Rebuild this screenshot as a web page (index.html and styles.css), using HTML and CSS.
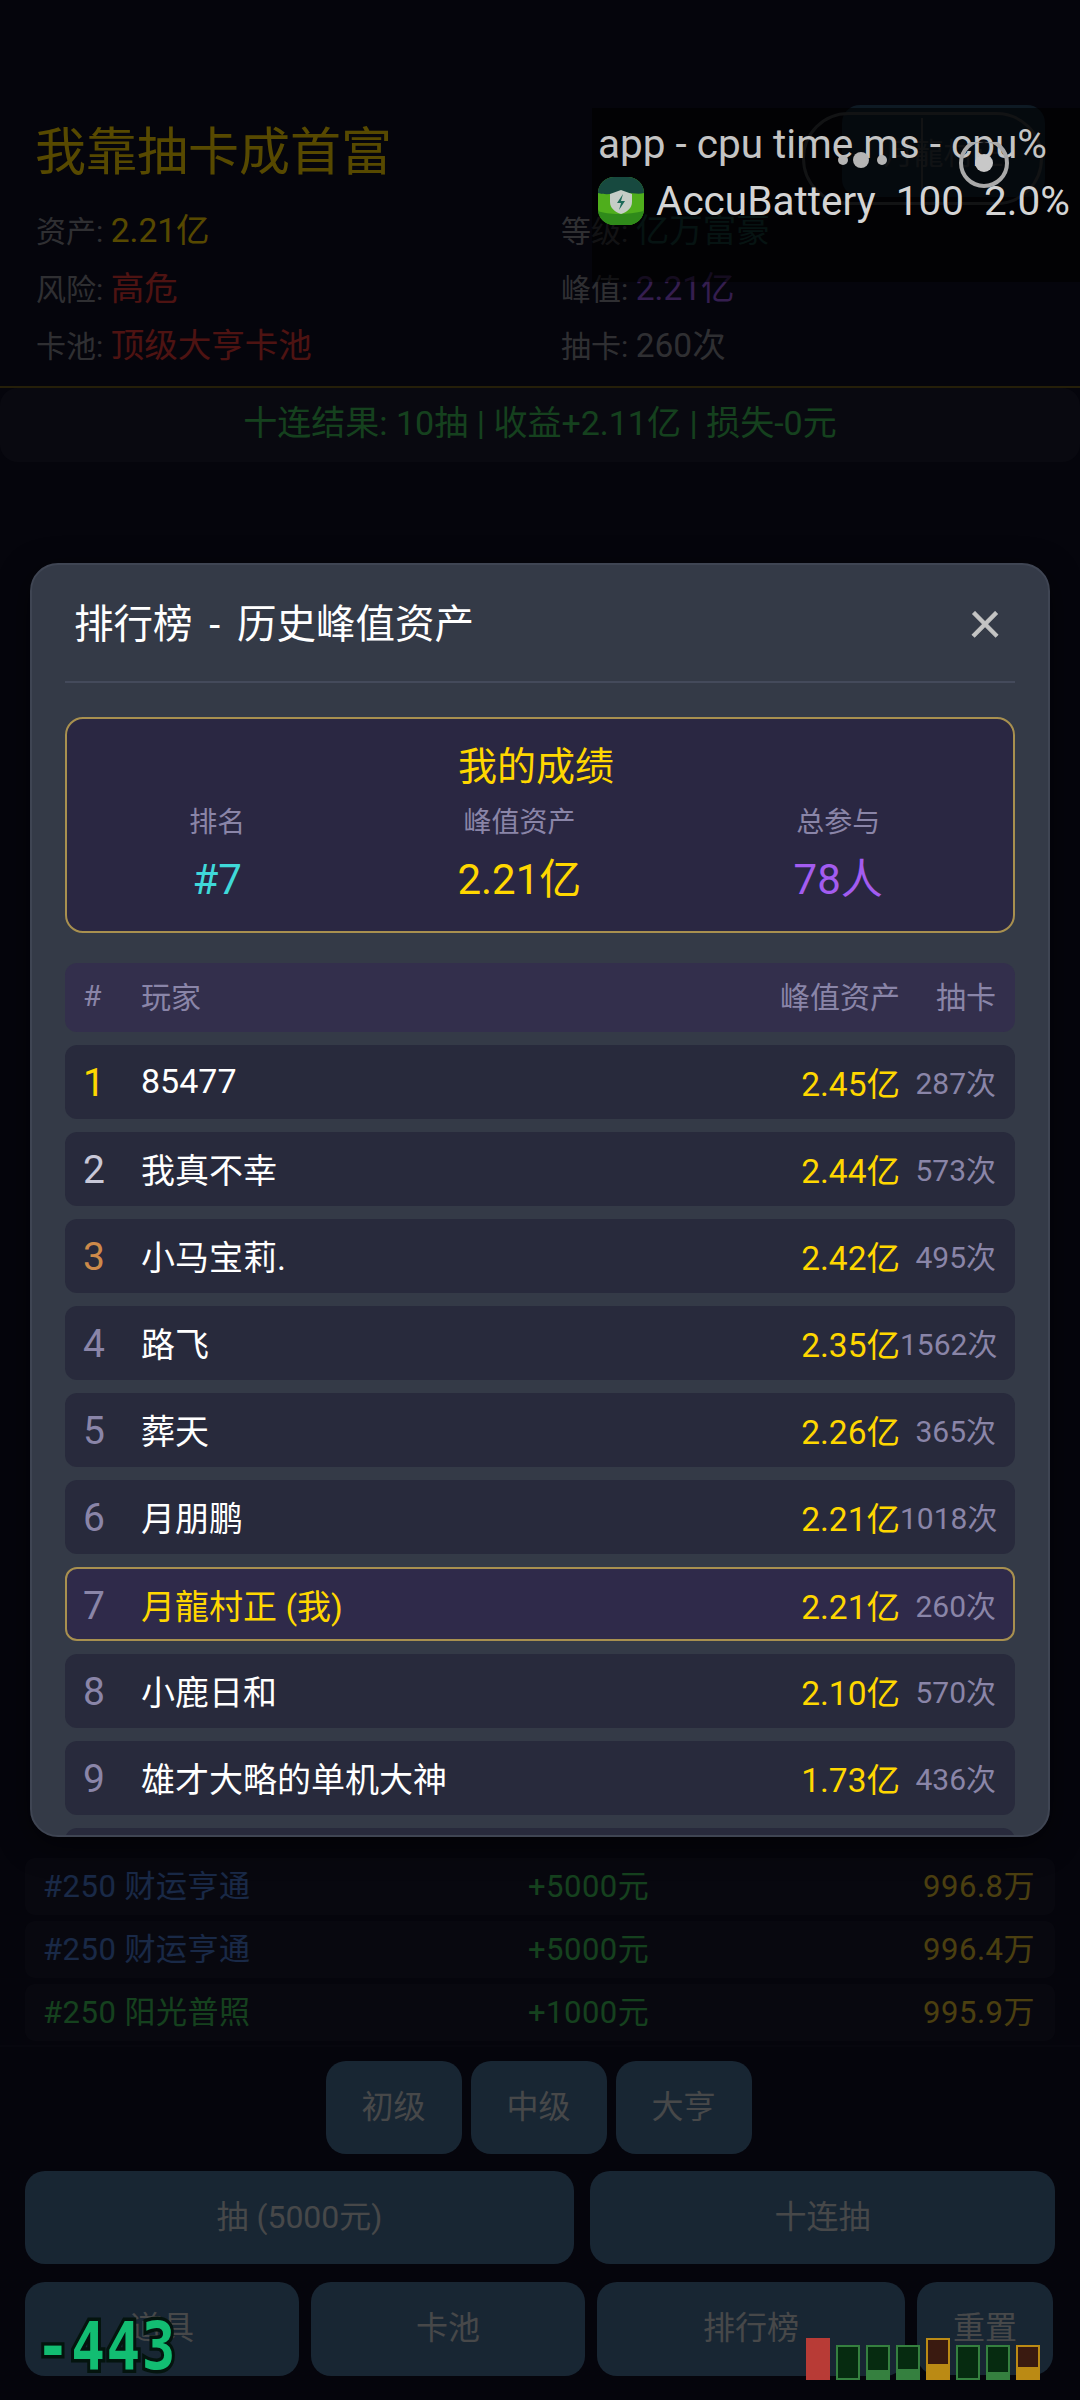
FILE: index.html
```html
<!DOCTYPE html>
<html lang="zh-CN">
<head>
    <meta charset="UTF-8">
    <meta name="viewport" content="width=device-width, initial-scale=1.0">
    <title>我靠抽卡成首富</title>
    <link rel="stylesheet" href="styles.css">
</head>
<body>
    <div class="game">
        <div class="top-panel">
            <div class="title-row">
                <h1>我靠抽卡成首富</h1>
                <div class="user-btn">月龍村正</div>
            </div>
            <div class="stats">
                <div>资产: <span class="gold">2.21亿</span></div>
                <div>等级: <span class="teal">亿万富豪</span></div>
                <div>风险: <span class="red">高危</span></div>
                <div>峰值: <span class="purple">2.21亿</span></div>
                <div>卡池: <span class="red">顶级大亨卡池</span></div>
                <div>抽卡: <span>260次</span></div>
            </div>
        </div>
        <div class="result-bar">十连结果: 10抽 | 收益+2.11亿 | 损失-0元</div>

        <div class="log">
            <div class="log-row">
                <span class="log-name blue">#250 财运亨通</span>
                <span class="log-gain">+5000元</span>
                <span class="log-total">996.8万</span>
            </div>
            <div class="log-row">
                <span class="log-name blue">#250 财运亨通</span>
                <span class="log-gain">+5000元</span>
                <span class="log-total">996.4万</span>
            </div>
            <div class="log-row">
                <span class="log-name green">#250 阳光普照</span>
                <span class="log-gain">+1000元</span>
                <span class="log-total">995.9万</span>
            </div>
        </div>

        <div class="controls">
            <div class="btn-row center">
                <button class="btn small">初级</button>
                <button class="btn small">中级</button>
                <button class="btn small">大亨</button>
            </div>
            <div class="btn-row draw">
                <button class="btn single">抽 (5000元)</button>
                <button class="btn ten">十连抽</button>
            </div>
            <div class="btn-row tools">
                <button class="btn tool">道具</button>
                <button class="btn tool">卡池</button>
                <button class="btn rank">排行榜</button>
                <button class="btn small">重置</button>
            </div>
        </div>
    </div>

    <div class="backdrop"></div>

    <div class="capsule">
        <svg width="241" height="93" viewBox="0 0 241 93">
            <rect x="1.5" y="1.5" width="238" height="90" rx="45" fill="none" stroke="#2e3033" stroke-width="3"/>
            <line x1="120" y1="6" x2="120" y2="88" stroke="#2e3033" stroke-width="2"/>
        </svg>
    </div>

    <div class="modal">
        <div class="modal-head">
            <h2>排行榜 - 历史峰值资产</h2>
            <span class="close">×</span>
        </div>

        <div class="my-card">
            <h3>我的成绩</h3>
            <div class="my-stats">
                <div class="my-stat">
                    <div class="my-label">排名</div>
                    <div class="my-value cyan">#7</div>
                </div>
                <div class="my-stat">
                    <div class="my-label">峰值资产</div>
                    <div class="my-value yellow">2.21亿</div>
                </div>
                <div class="my-stat">
                    <div class="my-label">总参与</div>
                    <div class="my-value violet">78人</div>
                </div>
            </div>
        </div>

        <div class="table-head">
            <span class="col-rank">#</span>
            <span class="col-name">玩家</span>
            <span class="col-asset">峰值资产</span>
            <span class="col-count">抽卡</span>
        </div>

        <div class="rows">
            <div class="row"><span class="col-rank first">1</span><span class="col-name">85477</span><span class="col-asset">2.45亿</span><span class="col-count">287次</span></div>
            <div class="row"><span class="col-rank second">2</span><span class="col-name">我真不幸</span><span class="col-asset">2.44亿</span><span class="col-count">573次</span></div>
            <div class="row"><span class="col-rank third">3</span><span class="col-name">小马宝莉.</span><span class="col-asset">2.42亿</span><span class="col-count">495次</span></div>
            <div class="row"><span class="col-rank">4</span><span class="col-name">路飞</span><span class="col-asset">2.35亿</span><span class="col-count">1562次</span></div>
            <div class="row"><span class="col-rank">5</span><span class="col-name">葬天</span><span class="col-asset">2.26亿</span><span class="col-count">365次</span></div>
            <div class="row"><span class="col-rank">6</span><span class="col-name">月朋鹏</span><span class="col-asset">2.21亿</span><span class="col-count">1018次</span></div>
            <div class="row me"><span class="col-rank">7</span><span class="col-name">月龍村正 (我)</span><span class="col-asset">2.21亿</span><span class="col-count">260次</span></div>
            <div class="row"><span class="col-rank">8</span><span class="col-name">小鹿日和</span><span class="col-asset">2.10亿</span><span class="col-count">570次</span></div>
            <div class="row"><span class="col-rank">9</span><span class="col-name">雄才大略的单机大神</span><span class="col-asset">1.73亿</span><span class="col-count">436次</span></div>
            <div class="row"></div>
        </div>
    </div>

    <!-- dev overlays that sit on top of the app -->
    <div class="perf">
        <div class="perf-line">app - cpu time ms - cpu%</div>
        <div class="perf-line app">
            <svg width="46" height="48" viewBox="0 0 46 48">
                <rect width="46" height="48" rx="16" fill="#4fae1c"/>
                <path d="M0 34c10 4 30 4 46 0v-2a16 16 0 0 1 -16 16h-14a16 16 0 0 1 -16 -14z" fill="#2f8a1a"/>
                <path d="M0 16a16 16 0 0 1 16-16h14a16 16 0 0 1 16 16c-7 2-13-1-23 0s-16 2-23 0z" fill="#17493f"/>
                <path d="M23 13l11 4v8c0 6-5 10-11 12-6-2-11-6-11-12v-8z" fill="#c6cdc6"/>
                <path d="M25 17l-6 9h4l-2 7 6-9h-4z" fill="#1d6a58"/>
            </svg>
            <span>AccuBattery  100  2.0%</span>
        </div>
    </div>

    <svg class="dots" width="240" height="60" viewBox="0 0 240 60">
        <circle cx="5" cy="18" r="5" fill="#b5b5b5"/>
        <circle cx="23" cy="18" r="8" fill="#b5b5b5"/>
        <circle cx="44" cy="18" r="5" fill="#b5b5b5"/>
        <circle cx="146" cy="21" r="23" fill="none" stroke="#a9a9a9" stroke-width="4"/>
        <circle cx="146" cy="21" r="9" fill="#c8c8c8"/>
    </svg>

    <div class="delta">-443</div>

    <div class="bars">
        <div class="bar tall red-bar"></div>
        <div class="bar green-bar"><i style="height: 31px"></i></div>
        <div class="bar green-bar"><i style="height: 23px"></i></div>
        <div class="bar green-bar"><i style="height: 22px"></i></div>
        <div class="bar tall amber-bar"><i style="height: 24px"></i></div>
        <div class="bar green-bar"><i style="height: 31px"></i></div>
        <div class="bar green-bar"><i style="height: 25px"></i></div>
        <div class="bar amber-bar"><i style="height: 20px"></i></div>
    </div>
</body>
</html>
```

FILE: styles.css
```css
* {
    margin: 0;
    padding: 0;
    box-sizing: border-box;
    font-family: Roboto, 'Noto Sans CJK SC', sans-serif;
}

body {
    width: 1080px;
    height: 2400px;
    position: relative;
    overflow: hidden;
    background-color: #0f0f23;
}

.game {
    height: 2400px;
    display: flex;
    flex-direction: column;
    padding-top: 105px;
    color: #8a8a94;
    font-size: 33px;
}

.title-row {
    display: flex;
    justify-content: space-between;
    align-items: center;
    padding: 0 35px;
    height: 92px;
}

h1 {
    font-size: 51px;
    font-weight: 400;
    color: #ffd700;
    padding-bottom: 6px;
}

.user-btn {
    width: 203px;
    height: 92px;
    display: flex;
    align-items: center;
    justify-content: center;
    border-radius: 18px;
    background-color: #2a4d69;
    color: #7a8a99;
    font-size: 30px;
}

.top-panel {
    border-bottom: 2px solid #6e5d1c;
}

.stats {
    display: grid;
    grid-template-columns: 525px 1fr;
    padding: 5px 36px 11px;
}

.stats > div {
    height: 57.5px;
    line-height: 57px;
    font-size: 30px;
}

.stats span {
    font-size: 33.5px;
}

.gold { color: #ffd700; }
.teal { color: #2f8f83; }
.red { color: #e53935; }
.purple { color: #9b59e6; }

.result-bar {
    height: 74px;
    line-height: 70px;
    text-align: center;
    border-radius: 18px;
    background-color: #1c1c30;
    color: #3fbf58;
    font-size: 34px;
}

.log {
    margin-top: auto;
    padding: 0 25px;
    display: flex;
    flex-direction: column;
    gap: 6px;
}

.log-row {
    height: 57px;
    padding: 0 20px 6px 18px;
    display: grid;
    grid-template-columns: 2fr 1.5fr 1.5fr;
    align-items: center;
    border-radius: 10px;
    background-color: #1a1a2e;
    font-size: 31px;
    letter-spacing: 0.5px;
}

.log-name.blue { color: #4a7ad0; }
.log-name.green { color: #3fbf58; }
.log-gain { color: #3fbf58; text-align: center; }
.log-total { color: #ddba2f; text-align: right; }

.controls {
    margin-top: 4px;
    height: 355px;
    padding: 14px 25px 0;
    background-color: #101024;
    border-top: 2px solid #15152a;
    display: flex;
    flex-direction: column;
}

.btn-row {
    display: flex;
}

.btn-row.center {
    justify-content: center;
    gap: 9px;
    padding-right: 3px;
    margin-bottom: 17px;
}

.btn-row.draw {
    gap: 16px;
    margin-bottom: 18px;
}

.btn-row.tools {
    gap: 12px;
}

.btn {
    border: none;
    border-radius: 20px;
    padding-bottom: 8px;
    background-color: #476f96;
    color: #cfd3d6;
    font-size: 32px;
}

.btn.small { width: 136px; height: 93px; }
.btn.single { width: 549px; height: 93px; }
.btn.ten { width: 465px; height: 93px; }
.btn.tool { width: 274px; height: 94px; }
.btn.rank { width: 308px; height: 94px; }

.backdrop {
    position: absolute;
    inset: 0;
    background-color: rgba(0, 0, 0, 0.66);
}

.capsule {
    position: absolute;
    left: 802px;
    top: 112px;
    height: 93px;
}

/* leaderboard dialog */
.modal {
    position: absolute;
    left: 30px;
    top: 563px;
    width: 1020px;
    height: 1274px;
    overflow: hidden;
    padding: 0 33px;
    border-radius: 28px;
    border: 2px solid #3f4553;
    background-color: #343a47;
    box-shadow: 0 8px 30px rgba(0, 0, 0, 0.5);
    color: white;
}

.modal-head {
    height: 118px;
    display: flex;
    justify-content: space-between;
    align-items: center;
    border-bottom: 2px solid #444a5b;
    padding: 0 14px 0 9px;
}

h2 {
    font-size: 39.5px;
    font-weight: 400;
    word-spacing: 7px;
    padding-bottom: 6px;
}

.close {
    font-size: 60px;
    font-weight: 300;
    line-height: 1;
    padding-bottom: 6px;
    color: #c4c4c4;
    -webkit-text-stroke: 1px #c4c4c4;
}

.my-card {
    margin-top: 34px;
    height: 216px;
    padding: 0 24px 0 16px;
    border: 2px solid #a8904f;
    border-radius: 18px;
    background-color: #2a2742;
    text-align: center;
}

h3 {
    padding-top: 21px;
    font-size: 39px;
    line-height: 54px;
    font-weight: 400;
    color: #ffd700;
}

.my-stats {
    display: flex;
    justify-content: space-around;
    margin-top: 9px;
}

.my-label {
    font-size: 28px;
    line-height: 40px;
    color: #8a85a8;
}

.my-value {
    margin-top: 6px;
    font-size: 42px;
    line-height: 62px;
}

.cyan { color: #3fd9d9; }
.yellow { color: #ffd700; }
.violet { color: #a35cf0; }

.table-head, .row {
    display: grid;
    grid-template-columns: 58px 1fr auto 96px;
    align-items: center;
    padding: 0 19px 2px 18px;
    border-radius: 12px;
}

.table-head {
    height: 69px;
    margin-top: 30px;
    padding-bottom: 5px;
    background-color: #332f4c;
    font-size: 30px;
    color: #8a85a8;
}

.rows {
    margin-top: 13px;
    display: flex;
    flex-direction: column;
    gap: 13px;
}

.row {
    height: 74px;
    flex-shrink: 0;
    background-color: #282a3c;
    font-size: 34px;
}

.col-asset {
    text-align: right;
}

.col-count {
    text-align: right;
    white-space: nowrap;
}

.row .col-rank {
    padding-top: 3px;
    font-size: 39px;
    color: #8a85a8;
}

.row .col-rank.first { color: #ffd700; }
.row .col-rank.second { color: #c8c8d8; }
.row .col-rank.third { color: #cd8a4a; }

.row .col-asset {
    color: #ffd700;
    font-size: 33.5px;
}

.row .col-count {
    font-size: 30px;
    color: #8a85a8;
}

.row.me {
    background-color: #2f2a4a;
    border: 2px solid #a8904f;
    padding: 0 17px 0 16px;
}

.row.me .col-name {
    color: #ffd700;
}

/* overlays */
.perf {
    position: absolute;
    left: 592px;
    top: 108px;
    width: 488px;
    height: 174px;
    padding: 10px 0 0 6px;
    background-color: rgba(0, 0, 0, 0.6);
    color: #c4c4c4;
    font-size: 40.5px;
}

.perf-line {
    white-space: pre;
    height: 52px;
    line-height: 52px;
    font-family: Roboto, sans-serif;
}

.perf-line.app {
    display: flex;
    align-items: center;
    gap: 12px;
    margin-top: 5px;
    color: #d4d4d4;
}

.perf-line span {
    font-family: Roboto, sans-serif;
}

.dots {
    position: absolute;
    left: 838px;
    top: 142px;
}

.delta {
    position: absolute;
    left: 36px;
    top: 2309px;
    font-family: 'DejaVu Sans Mono', monospace;
    font-size: 56px;
    font-weight: 700;
    line-height: 76px;
    letter-spacing: 1.5px;
    color: #12bd72;
    -webkit-text-stroke: 6px #04140e;
    paint-order: stroke fill;
    transform: scaleY(1.16);
}

.bars {
    position: absolute;
    left: 806px;
    top: 2338px;
    height: 42px;
    display: flex;
    align-items: flex-end;
    gap: 6px;
}

.bar {
    width: 24px;
    height: 35px;
    padding: 2px;
}

.bar.tall { height: 42px; }
.bar i { display: block; }

.red-bar { background-color: #b83b36; }
.green-bar { background-color: #35803f; }
.green-bar i { background-color: #062b10; }
.amber-bar { background-color: #bb8a14; }
.amber-bar i { background-color: #3a1a10; }
```
